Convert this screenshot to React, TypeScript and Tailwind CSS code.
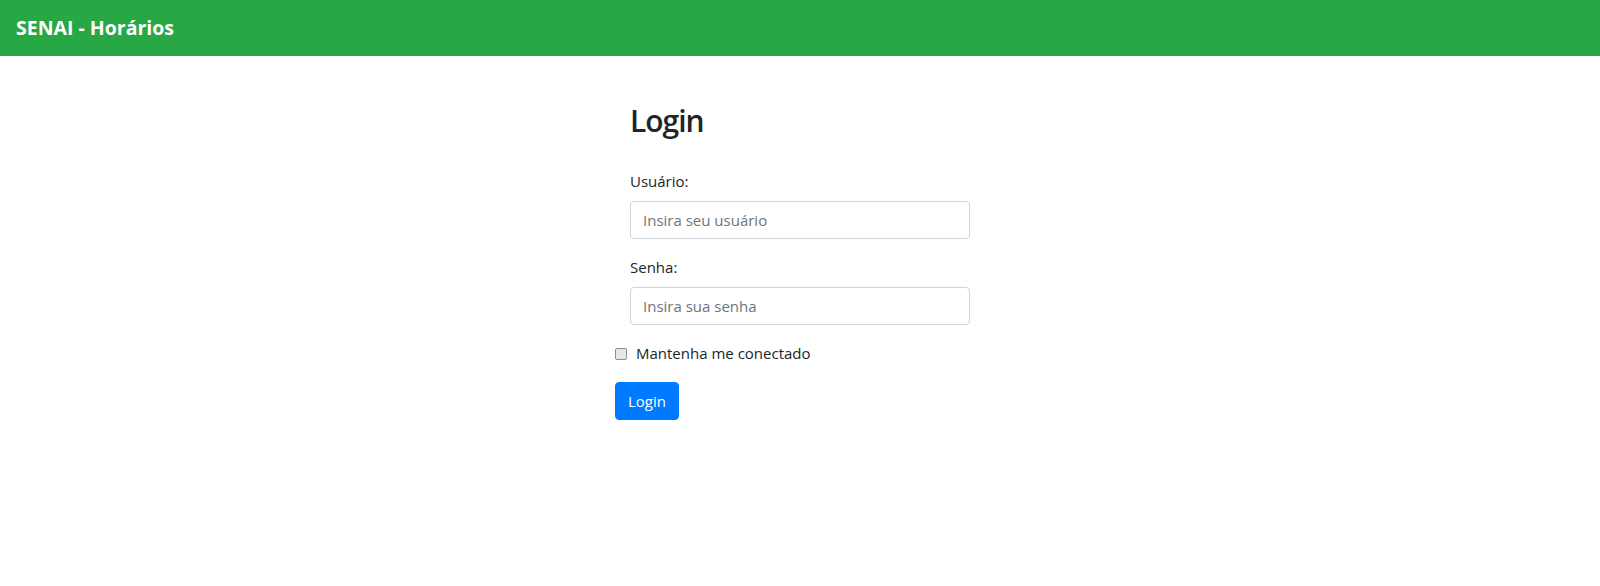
import React from "react";

export default function App() {
  return (
    <div className="min-h-[586px] bg-white text-[#212529]" style={{ fontFamily: '"Open Sans", "Noto Sans", sans-serif' }}>
      <nav className="h-14 bg-[#28a745] flex items-center px-4">
        <span className="text-white text-[19.5px] font-bold leading-[30px]">SENAI - Horários</span>
      </nav>
      <div className="w-[370px] mx-auto pt-[46px]">
        <h2 className="px-[15px] text-[30px] leading-[38px] font-semibold tracking-[-1px] mb-[29px]">Login</h2>
        <div className="px-[15px]">
          <div className="mb-4">
            <label className="block text-[15px] leading-6 mb-2">Usuário:</label>
            <input
              type="text"
              placeholder="Insira seu usuário"
              className="block w-full h-[38px] px-3 border border-[#ced4da] rounded-[4px] text-[15px] placeholder:text-[#6c757d] outline-none"
            />
          </div>
          <div className="mb-4">
            <label className="block text-[15px] leading-6 mb-2">Senha:</label>
            <input
              type="password"
              placeholder="Insira sua senha"
              className="block w-full h-[38px] px-3 border border-[#ced4da] rounded-[4px] text-[15px] placeholder:text-[#6c757d] outline-none"
            />
          </div>
        </div>
        <div className="flex items-center h-6 mb-[17px]">
          <input
            type="checkbox"
            className="appearance-none w-[12px] h-[12px] border border-[#8f8f8f] rounded-[2px] bg-[#e6e6e6] m-0 mr-[9px] mt-[2px]"
          />
          <span className="text-[15px] leading-6">Mantenha me conectado</span>
        </div>
        <button className="h-[38px] px-3 bg-[#007bff] text-white text-[15px] rounded-[4px] border border-[#007bff]">
          Login
        </button>
      </div>
    </div>
  );
}
